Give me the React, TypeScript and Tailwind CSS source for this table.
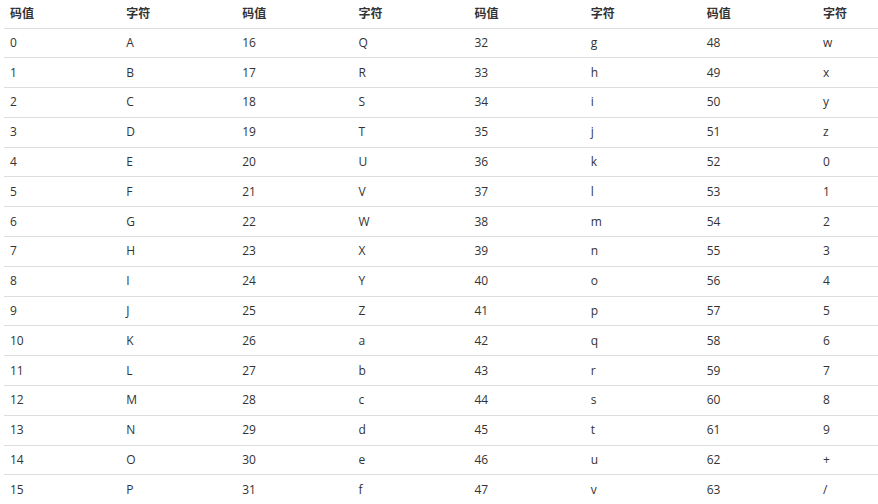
import { Fragment } from 'react';

const chars = 'ABCDEFGHIJKLMNOPQRSTUVWXYZabcdefghijklmnopqrstuvwxyz0123456789+/';

export default function App() {
  const rows = Array.from({ length: 16 }, (_, i) => i);

  return (
    <div
      className="w-[878px] h-[504px] overflow-hidden bg-white text-[12px] text-[#333]"
      style={{ fontFamily: '"Open Sans", "Noto Sans CJK SC", sans-serif' }}
    >
      <table className="ml-[4px] w-[929px] table-fixed border-collapse">
        <thead>
          <tr className="h-[28px] border-b border-[#ddd]">
            {[0, 1, 2, 3].map((g) => (
              <Fragment key={g}>
                <th className="pl-[6px] text-left font-bold">码值</th>
                <th className="pl-[6px] text-left font-bold">字符</th>
              </Fragment>
            ))}
          </tr>
        </thead>
        <tbody>
          {rows.map((r) => (
            <tr key={r} className="h-[29.8px] border-b border-[#ddd]">
              {[0, 1, 2, 3].map((g) => {
                const code = g * 16 + r;
                return (
                  <Fragment key={g}>
                    <td className="pl-[6px]">{code}</td>
                    <td className="pl-[6px]">{chars[code]}</td>
                  </Fragment>
                );
              })}
            </tr>
          ))}
        </tbody>
      </table>
    </div>
  );
}
